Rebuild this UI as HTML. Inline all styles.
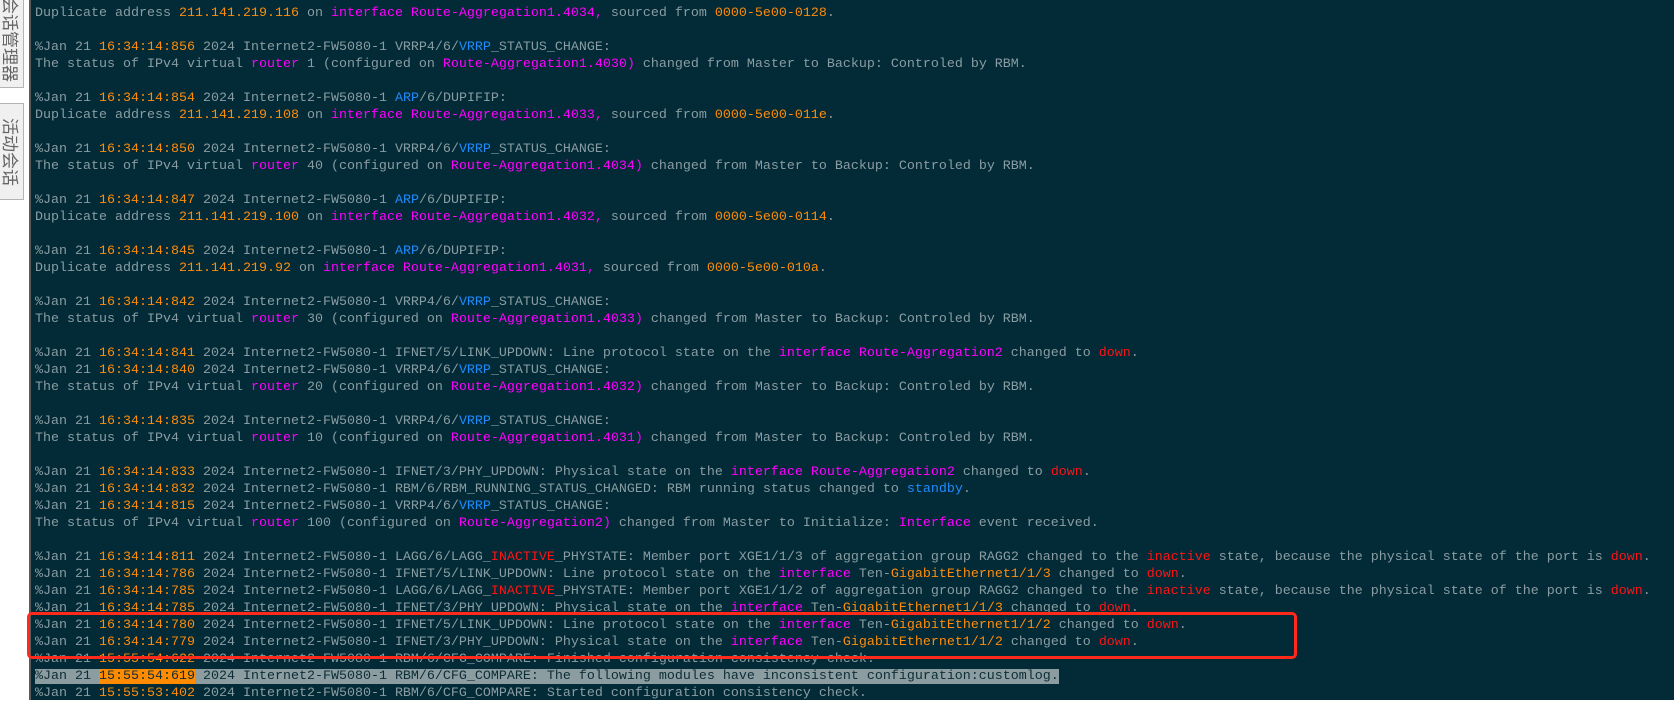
<!DOCTYPE html>
<html><head><meta charset="utf-8"><style>
html,body{margin:0;padding:0;width:1674px;height:700px;overflow:hidden;background:#fff;}
.tab{position:absolute;left:0;width:24px;background:#f0f0f0;border:1px solid #b4b4b4;border-left:none;box-sizing:border-box;color:#666;font-family:"Liberation Sans","Noto Sans CJK SC",sans-serif;font-size:17px;writing-mode:vertical-rl;text-orientation:sideways;display:flex;align-items:center;justify-content:center;}
#term{position:absolute;left:29px;top:0;width:1645px;height:700px;background:#022a37;border-left:2px solid #5a5a5a;box-sizing:border-box;}
pre{margin:0;position:absolute;left:4px;top:5px;font-family:"Liberation Mono",monospace;font-size:13.33px;line-height:17px;color:#8a9da2;}
.o{color:#ff8c0a}.m{color:#ff00ff}.b{color:#1e8cff}.r{color:#ff1414}
.hl{background:#8b9da1;color:#0d2c36}.hl .t{background:#ff8c00;color:#0d2c36}
#box{position:absolute;left:27px;top:612px;width:1270px;height:47px;border:3px solid #ff2a1a;border-radius:5px;box-sizing:border-box;}
</style></head><body>
<div class="tab" style="top:-10px;height:98px;">会话管理器</div>
<div class="tab" style="top:103px;height:97px;">活动会话</div>
<div id="term"><pre>Duplicate address <span class="o">211.141.219.116</span> on <span class="m">interface Route-Aggregation1.4034,</span> sourced from <span class="o">0000-5e00-0128</span>.

%Jan 21 <span class="o">16:34:14:856</span> 2024 Internet2-FW5080-1 VRRP4/6/<span class="b">VRRP</span>_STATUS_CHANGE:
The status of IPv4 virtual <span class="m">router</span> 1 (configured on <span class="m">Route-Aggregation1.4030)</span> changed from Master to Backup: Controled by RBM.

%Jan 21 <span class="o">16:34:14:854</span> 2024 Internet2-FW5080-1 <span class="b">ARP</span>/6/DUPIFIP:
Duplicate address <span class="o">211.141.219.108</span> on <span class="m">interface Route-Aggregation1.4033,</span> sourced from <span class="o">0000-5e00-011e</span>.

%Jan 21 <span class="o">16:34:14:850</span> 2024 Internet2-FW5080-1 VRRP4/6/<span class="b">VRRP</span>_STATUS_CHANGE:
The status of IPv4 virtual <span class="m">router</span> 40 (configured on <span class="m">Route-Aggregation1.4034)</span> changed from Master to Backup: Controled by RBM.

%Jan 21 <span class="o">16:34:14:847</span> 2024 Internet2-FW5080-1 <span class="b">ARP</span>/6/DUPIFIP:
Duplicate address <span class="o">211.141.219.100</span> on <span class="m">interface Route-Aggregation1.4032,</span> sourced from <span class="o">0000-5e00-0114</span>.

%Jan 21 <span class="o">16:34:14:845</span> 2024 Internet2-FW5080-1 <span class="b">ARP</span>/6/DUPIFIP:
Duplicate address <span class="o">211.141.219.92</span> on <span class="m">interface Route-Aggregation1.4031,</span> sourced from <span class="o">0000-5e00-010a</span>.

%Jan 21 <span class="o">16:34:14:842</span> 2024 Internet2-FW5080-1 VRRP4/6/<span class="b">VRRP</span>_STATUS_CHANGE:
The status of IPv4 virtual <span class="m">router</span> 30 (configured on <span class="m">Route-Aggregation1.4033)</span> changed from Master to Backup: Controled by RBM.

%Jan 21 <span class="o">16:34:14:841</span> 2024 Internet2-FW5080-1 IFNET/5/LINK_UPDOWN: Line protocol state on the <span class="m">interface Route-Aggregation2</span> changed to <span class="r">down</span>.
%Jan 21 <span class="o">16:34:14:840</span> 2024 Internet2-FW5080-1 VRRP4/6/<span class="b">VRRP</span>_STATUS_CHANGE:
The status of IPv4 virtual <span class="m">router</span> 20 (configured on <span class="m">Route-Aggregation1.4032)</span> changed from Master to Backup: Controled by RBM.

%Jan 21 <span class="o">16:34:14:835</span> 2024 Internet2-FW5080-1 VRRP4/6/<span class="b">VRRP</span>_STATUS_CHANGE:
The status of IPv4 virtual <span class="m">router</span> 10 (configured on <span class="m">Route-Aggregation1.4031)</span> changed from Master to Backup: Controled by RBM.

%Jan 21 <span class="o">16:34:14:833</span> 2024 Internet2-FW5080-1 IFNET/3/PHY_UPDOWN: Physical state on the <span class="m">interface Route-Aggregation2</span> changed to <span class="r">down</span>.
%Jan 21 <span class="o">16:34:14:832</span> 2024 Internet2-FW5080-1 RBM/6/RBM_RUNNING_STATUS_CHANGED: RBM running status changed to <span class="b">standby</span>.
%Jan 21 <span class="o">16:34:14:815</span> 2024 Internet2-FW5080-1 VRRP4/6/<span class="b">VRRP</span>_STATUS_CHANGE:
The status of IPv4 virtual <span class="m">router</span> 100 (configured on <span class="m">Route-Aggregation2)</span> changed from Master to Initialize: <span class="m">Interface</span> event received.

%Jan 21 <span class="o">16:34:14:811</span> 2024 Internet2-FW5080-1 LAGG/6/LAGG_<span class="r">INACTIVE</span>_PHYSTATE: Member port XGE1/1/3 of aggregation group RAGG2 changed to the <span class="r">inactive</span> state, because the physical state of the port is <span class="r">down</span>.
%Jan 21 <span class="o">16:34:14:786</span> 2024 Internet2-FW5080-1 IFNET/5/LINK_UPDOWN: Line protocol state on the <span class="m">interface</span> Ten-<span class="o">GigabitEthernet1/1/3</span> changed to <span class="r">down</span>.
%Jan 21 <span class="o">16:34:14:785</span> 2024 Internet2-FW5080-1 LAGG/6/LAGG_<span class="r">INACTIVE</span>_PHYSTATE: Member port XGE1/1/2 of aggregation group RAGG2 changed to the <span class="r">inactive</span> state, because the physical state of the port is <span class="r">down</span>.
%Jan 21 <span class="o">16:34:14:785</span> 2024 Internet2-FW5080-1 IFNET/3/PHY_UPDOWN: Physical state on the <span class="m">interface</span> Ten-<span class="o">GigabitEthernet1/1/3</span> changed to <span class="r">down</span>.
%Jan 21 <span class="o">16:34:14:780</span> 2024 Internet2-FW5080-1 IFNET/5/LINK_UPDOWN: Line protocol state on the <span class="m">interface</span> Ten-<span class="o">GigabitEthernet1/1/2</span> changed to <span class="r">down</span>.
%Jan 21 <span class="o">16:34:14:779</span> 2024 Internet2-FW5080-1 IFNET/3/PHY_UPDOWN: Physical state on the <span class="m">interface</span> Ten-<span class="o">GigabitEthernet1/1/2</span> changed to <span class="r">down</span>.
%Jan 21 <span class="o">15:55:54:622</span> 2024 Internet2-FW5080-1 RBM/6/CFG_COMPARE: Finished configuration consistency check.
<span class="hl">%Jan 21 <span class="t">15:55:54:619</span> 2024 Internet2-FW5080-1 RBM/6/CFG_COMPARE: The following modules have inconsistent configuration:customlog.</span>
%Jan 21 <span class="o">15:55:53:402</span> 2024 Internet2-FW5080-1 RBM/6/CFG_COMPARE: Started configuration consistency check.</pre></div>
<div id="box"></div>
</body></html>
